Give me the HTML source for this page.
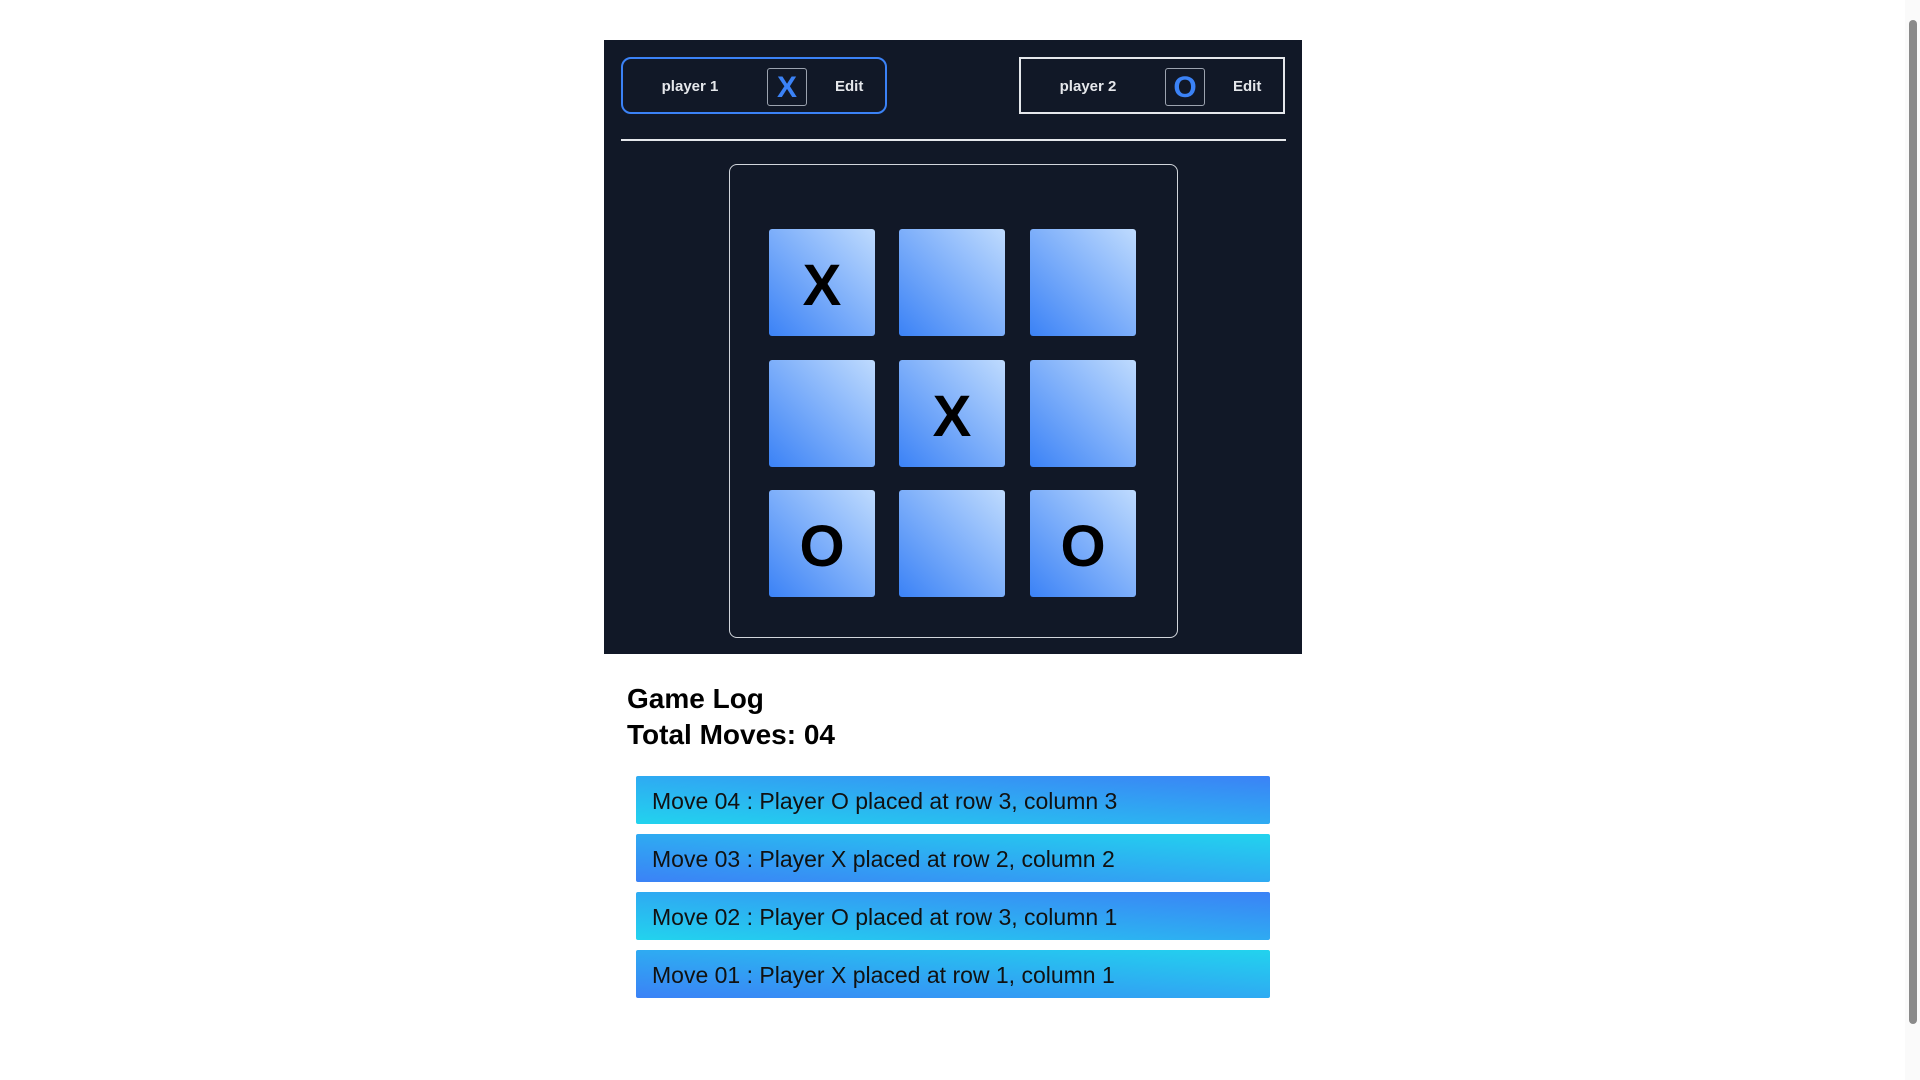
<!DOCTYPE html>
<html><head><meta charset="utf-8"><style>
*{margin:0;padding:0;box-sizing:border-box}
html,body{width:1920px;height:1080px;overflow:hidden;background:#fff;font-family:"Liberation Sans",sans-serif}
.panel{position:absolute;left:604px;top:40px;width:698px;height:614px;background:#111827}
.pl{position:absolute;top:57px;height:57px;width:266px;color:#e5e7eb;font-weight:bold;font-size:15px}
.pl .n{position:absolute;left:0;width:134px;text-align:center;top:19px}
.pl .s{position:absolute;left:144px;top:9px;width:40px;height:38px;border:1px solid #9ca3af;border-radius:3px;color:#3b82f6;font-size:30px;text-align:center;line-height:38px}
.pl .e{position:absolute;left:212px;top:19px}
.p1{left:621px;border:2px solid #3b82f6;border-radius:10px}
.p2{left:1019px;border:2px solid #e5e7eb}
.line{position:absolute;left:621px;top:139px;width:665px;height:2px;background:#e5e7eb}
.board{position:absolute;left:729px;top:164px;width:449px;height:474px;border:1px solid #d1d5db;border-radius:8px}
.c{position:absolute;width:106px;height:107px;border-radius:3px;background:linear-gradient(to top right,#3b82f6,#bfdbfe);font-weight:bold;font-size:58px;text-align:center;line-height:113px;color:#000}
h2{position:absolute;left:627px;font-size:28px;font-weight:bold;color:#000}
.log{position:absolute;left:636px;width:634px;height:48px;font-size:23px;color:#111;padding-left:16px;line-height:50px;border-radius:2px}
.a{background:linear-gradient(to top right,#22d3ee,#3b82f6)}
.b{background:linear-gradient(to top right,#3b82f6,#22d3ee)}
.sb{position:absolute;right:0;top:0;width:15px;height:1080px;background:#fafafa}
.th{position:absolute;left:4px;top:20px;width:8px;height:1004px;background:#8a8a8a;border-radius:4px}
</style></head><body>
<div class="panel"></div>
<div class="pl p1"><span class="n">player 1</span><span class="s">X</span><span class="e">Edit</span></div>
<div class="pl p2"><span class="n">player 2</span><span class="s">O</span><span class="e">Edit</span></div>
<div class="line"></div>
<div class="board"></div>
<div class="c" style="left:769px;top:229px">X</div>
<div class="c" style="left:899px;top:229px"></div>
<div class="c" style="left:1030px;top:229px"></div>
<div class="c" style="left:769px;top:360px"></div>
<div class="c" style="left:899px;top:360px">X</div>
<div class="c" style="left:1030px;top:360px"></div>
<div class="c" style="left:769px;top:490px">O</div>
<div class="c" style="left:899px;top:490px"></div>
<div class="c" style="left:1030px;top:490px">O</div>
<h2 style="top:683px">Game Log</h2>
<h2 style="top:719px">Total Moves: 04</h2>
<div class="log a" style="top:776px">Move 04 : Player O placed at row 3, column 3</div>
<div class="log b" style="top:834px">Move 03 : Player X placed at row 2, column 2</div>
<div class="log a" style="top:892px">Move 02 : Player O placed at row 3, column 1</div>
<div class="log b" style="top:950px">Move 01 : Player X placed at row 1, column 1</div>
<div class="sb"><div class="th"></div></div>
</body></html>
